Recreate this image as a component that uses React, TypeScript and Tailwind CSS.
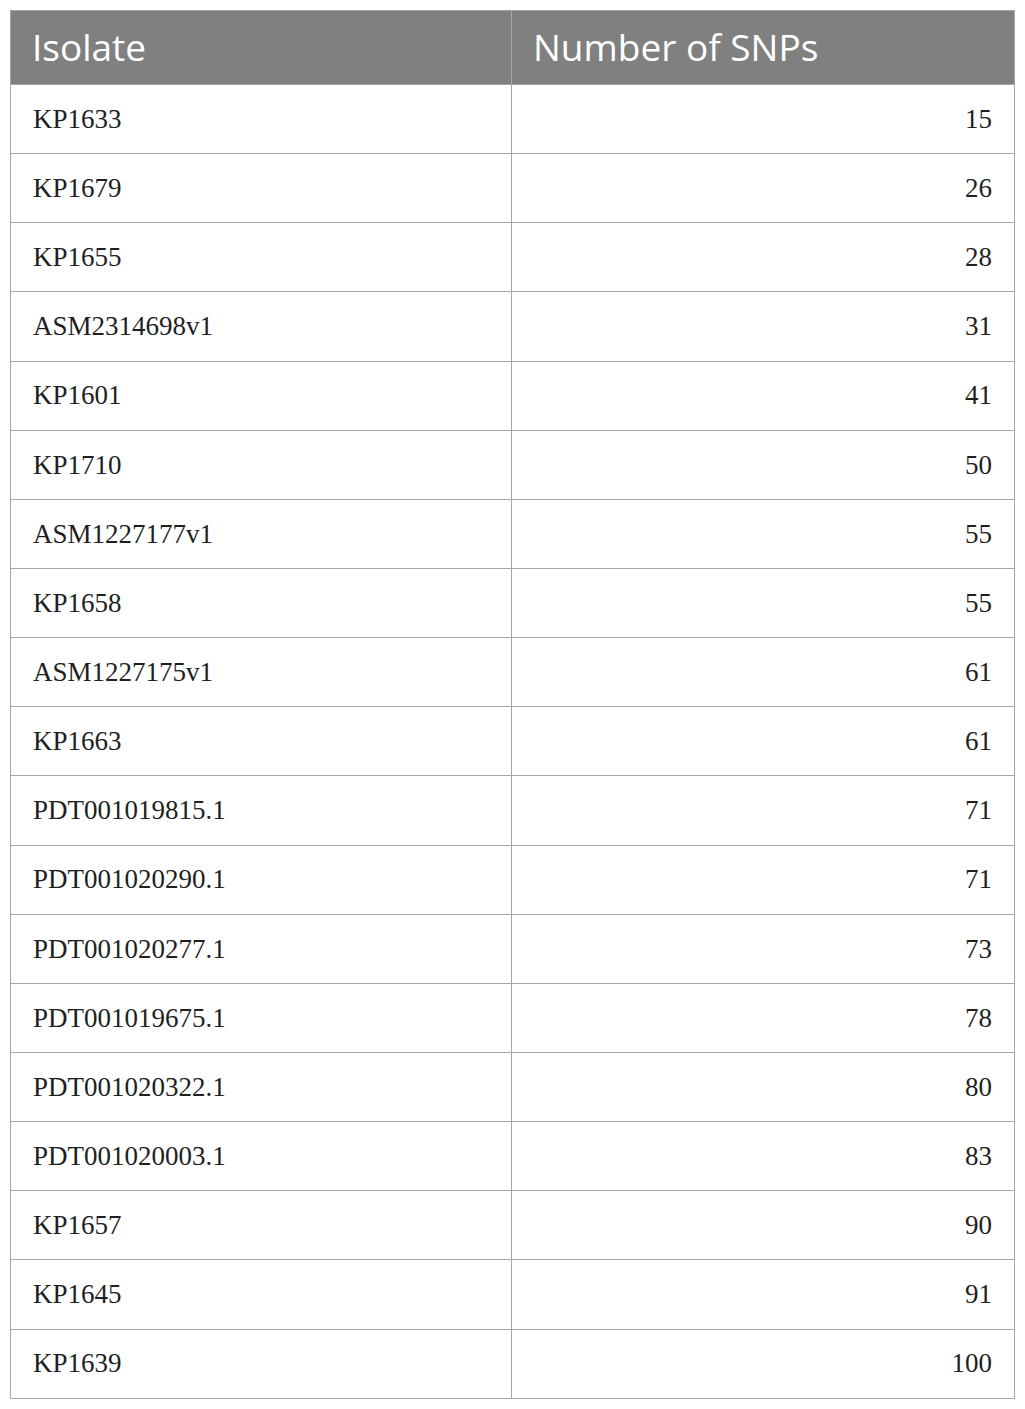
import React from "react";

const rows: [string, number][] = [
  ["KP1633", 15],
  ["KP1679", 26],
  ["KP1655", 28],
  ["ASM2314698v1", 31],
  ["KP1601", 41],
  ["KP1710", 50],
  ["ASM1227177v1", 55],
  ["KP1658", 55],
  ["ASM1227175v1", 61],
  ["KP1663", 61],
  ["PDT001019815.1", 71],
  ["PDT001020290.1", 71],
  ["PDT001020277.1", 73],
  ["PDT001019675.1", 78],
  ["PDT001020322.1", 80],
  ["PDT001020003.1", 83],
  ["KP1657", 90],
  ["KP1645", 91],
  ["KP1639", 100],
];

export default function App() {
  return (
    <div className="bg-white p-[10px] w-[1025px] h-[1409px]">
      <table className="w-[1004px] border-collapse table-fixed">
        <colgroup>
          <col className="w-[501px]" />
          <col className="w-[503px]" />
        </colgroup>
        <thead>
          <tr className="bg-[#808080] h-[74px]">
            <th className="border border-[#a6a6a6] px-[21px] pb-[2px] text-left font-normal text-white text-[37px] leading-none font-['Open_Sans',sans-serif]">
              Isolate
            </th>
            <th className="border border-[#a6a6a6] px-[21px] pb-[2px] text-left font-normal text-white text-[37px] leading-none font-['Open_Sans',sans-serif]">
              Number of SNPs
            </th>
          </tr>
        </thead>
        <tbody className="font-['Liberation_Serif',serif] text-[27px] text-[#1f1f1f]">
          {rows.map(([isolate, snps]) => (
            <tr key={isolate} className="h-[69.15px]">
              <td className="border border-[#a6a6a6] px-[22px]">{isolate}</td>
              <td className="border border-[#a6a6a6] px-[22px] text-right">{snps}</td>
            </tr>
          ))}
        </tbody>
      </table>
    </div>
  );
}
